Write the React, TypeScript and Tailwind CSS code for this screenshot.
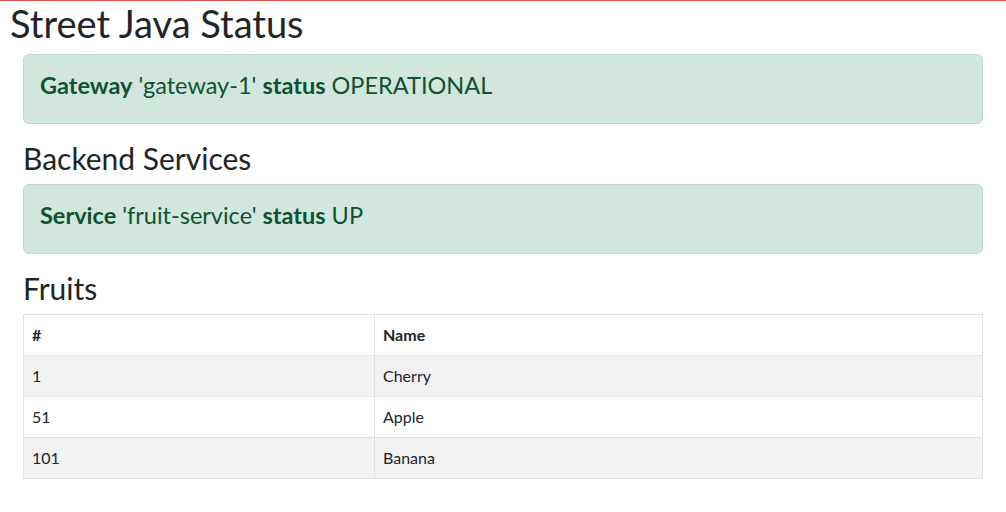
import React from "react";

const fruits = [
  { id: 1, name: "Cherry" },
  { id: 51, name: "Apple" },
  { id: 101, name: "Banana" },
];

export default function App() {
  return (
    <div
      className="min-h-[512px] bg-white text-[#212529] border-t border-[#d9534f]"
      style={{ fontFamily: "Lato, 'Noto Sans', sans-serif" }}
    >
      <h1 className="pl-[10px] text-[38px] leading-[44px] font-normal mt-0 mb-[9px]">
        Street Java Status
      </h1>
      <div className="w-[960px] ml-[23px]">
        <div className="h-[70px] border border-[#badbcc] bg-[#d1e7dd] text-[#0f5132] rounded-[6px] px-4 pt-[12px] text-[23.5px] leading-[36px]">
          <b>Gateway</b> 'gateway-1' <b>status</b> OPERATIONAL
        </div>
        <h3 className="text-[30px] leading-[36px] mt-[16px] mb-[8px]">Backend Services</h3>
        <div className="h-[70px] border border-[#badbcc] bg-[#d1e7dd] text-[#0f5132] rounded-[6px] px-4 pt-[12px] text-[23.5px] leading-[36px]">
          <b>Service</b> 'fruit-service' <b>status</b> UP
        </div>
        <h3 className="text-[30px] leading-[36px] mt-[16px] mb-[8px]">Fruits</h3>
        <table className="w-[960px] border-collapse text-[16px] leading-[24px]">
          <thead>
            <tr>
              <th className="w-[351px] text-left font-bold border border-[#dee2e6] px-2 py-2">#</th>
              <th className="text-left font-bold border border-[#dee2e6] px-2 py-2">Name</th>
            </tr>
          </thead>
          <tbody>
            {fruits.map((f, i) => (
              <tr key={f.id} className={i % 2 === 0 ? "bg-[#f2f2f2]" : "bg-white"}>
                <td className="border border-[#dee2e6] px-2 py-2">{f.id}</td>
                <td className="border border-[#dee2e6] px-2 py-2">{f.name}</td>
              </tr>
            ))}
          </tbody>
        </table>
      </div>
    </div>
  );
}
